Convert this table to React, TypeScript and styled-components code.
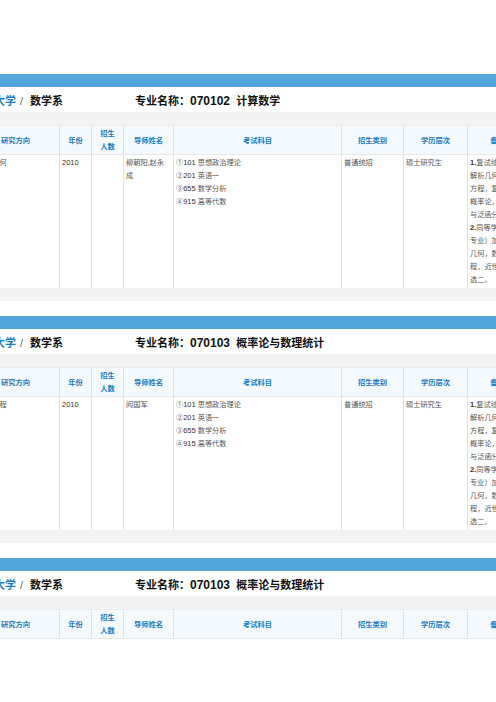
import React, { FC } from "react"
import styled, { createGlobalStyle } from "styled-components"

type Entry = {
  major: string
  code: string
  direction?: string
  year?: string
  tutors?: string
  exams?: string[]
  kind?: string
  level?: string
  notes?: string[]
}

const columns = [
  { title: "研究方向", width: 88 },
  { title: "年份", width: 32 },
  { title: "招生人数", width: 32, split: true },
  { title: "导师姓名", width: 50 },
  { title: "考试科目", width: 168, heavy: true },
  { title: "招生类别", width: 62, heavy: true },
  { title: "学历层次", width: 64 },
  { title: "备注", width: 60 },
  { title: "", width: 60 },
]

const exams = ["①101 思想政治理论", "②201 英语一", "③655 数学分析", "④915 高等代数"]

const notes = [
  "1.复试综合考试",
  "解析几何，常微分",
  "方程，复变函数，",
  "概率论，实变函数",
  "与泛函分析。",
  "2.同等学力（跨",
  "专业）加试：解析",
  "几何，数学分析，",
  "程，近世代数中任",
  "选二。",
]

const entries: Entry[] = [
  {
    major: "计算数学",
    code: "070102",
    direction: "计算几何",
    year: "2010",
    tutors: "柳朝阳,赵永成",
    exams,
    kind: "普通统招",
    level: "硕士研究生",
    notes,
  },
  {
    major: "概率论与数理统计",
    code: "070103",
    direction: "随机过程",
    year: "2010",
    tutors: "阎国军",
    exams,
    kind: "普通统招",
    level: "硕士研究生",
    notes,
  },
  { major: "概率论与数理统计", code: "070103" },
]

const template = columns.map((c) => `${c.width}px`).join(" ")

const Block: FC<{ entry: Entry }> = ({ entry }) => (
  <Section>
    <Bar />
    <TitleRow>
      <Department>
        <School>郑州大学</School>
        <Slash>/</Slash>
        数学系
      </Department>
      <Major>
        专业名称：<Code>{entry.code}</Code>
        {"  "}
        {entry.major}
      </Major>
    </TitleRow>
    <Strip />
    <Row>
      {columns.map((c, i) => (
        <HeadCell key={i} $heavy={c.heavy}>
          {c.split ? (
            <>
              {c.title.slice(0, 2)}
              <br />
              {c.title.slice(2)}
            </>
          ) : (
            c.title
          )}
        </HeadCell>
      ))}
    </Row>
    {entry.notes && (
      <>
        <Row>
          <Cell $indent>{entry.direction}</Cell>
          <Cell>
            <Num>{entry.year}</Num>
          </Cell>
          <Cell />
          <Cell>{entry.tutors}</Cell>
          <Cell $heavy>
            {entry.exams?.map((e) => (
              <Line key={e}>
                {e.slice(0, 1)}
                <Num>{e.slice(1, 4)}</Num>
                {e.slice(4)}
              </Line>
            ))}
          </Cell>
          <Cell $heavy>{entry.kind}</Cell>
          <Cell>{entry.level}</Cell>
          <Cell>
            {entry.notes.map((n, i) => (
              <Line key={i}>
                {/^\d\./.test(n) ? (
                  <>
                    <Num $bold>{n.slice(0, 2)}</Num>
                    {n.slice(2)}
                  </>
                ) : (
                  n
                )}
              </Line>
            ))}
          </Cell>
          <Cell />
        </Row>
        <Strip />
      </>
    )}
  </Section>
)

export default function App() {
  return (
    <>
      <GlobalStyle />
      <Page>
        <Inner>
          {entries.map((e, i) => (
            <Block key={i} entry={e} />
          ))}
        </Inner>
      </Page>
    </>
  )
}

const GlobalStyle = createGlobalStyle`
  html, body {
    margin: 0;
    padding: 0;
    background: #ffffff;
  }
  body {
    font-family: "Liberation Sans", "Noto Sans CJK SC", sans-serif;
  }
`

const Page = styled.div`
  width: 496px;
  height: 702px;
  overflow: hidden;
  padding-top: 74px;
  box-sizing: border-box;
`

const Inner = styled.div`
  margin-left: -28px;
  width: 620px;
  display: flex;
  flex-direction: column;
  gap: 15px;
`

const Section = styled.div`
  display: flex;
  flex-direction: column;
`

const Bar = styled.div`
  height: 13px;
  background: #55a5dd;
`

const TitleRow = styled.div`
  height: 25px;
  display: flex;
  align-items: center;
  font-size: 11px;
  font-weight: bold;
  color: #111;
`

const Department = styled.div`
  width: 163px;
  white-space: nowrap;
`

const School = styled.span`
  color: #1b7cc1;
`

const Slash = styled.span`
  color: #666;
  font-weight: normal;
  margin: 0 7px 0 4px;
`

const Major = styled.div`
  white-space: pre;
`

const Code = styled.span`
  font-size: 12px;
`

const Strip = styled.div`
  height: 13px;
  background: #f3f3f3;
`

const Row = styled.div`
  display: grid;
  grid-template-columns: ${template};
`

const HeadCell = styled.div<{ $heavy?: boolean }>`
  box-sizing: border-box;
  height: 30px;
  display: flex;
  align-items: center;
  justify-content: center;
  text-align: center;
  background: #f3f9fd;
  border-right: 1px solid #e2e2e2;
  border-left: ${({ $heavy }) => ($heavy ? "1px solid #e2e2e2" : "0")};
  margin-left: ${({ $heavy }) => ($heavy ? "-1px" : "0")};
  border-bottom: 1px solid #e8e8e8;
  border-top: 1px solid #ececec;
  color: #1b7cc1;
  font-weight: bold;
  font-size: 7.3px;
  line-height: 13px;
`

const Cell = styled.div<{ $heavy?: boolean; $indent?: boolean }>`
  box-sizing: border-box;
  height: 133px;
  padding: 1px 5px 0 ${({ $indent }) => ($indent ? "6px" : "2px")};
  border-right: 1px solid #e2e2e2;
  border-left: ${({ $heavy }) => ($heavy ? "1px solid #e2e2e2" : "0")};
  margin-left: ${({ $heavy }) => ($heavy ? "-1px" : "0")};
  color: #555;
  font-size: 7.2px;
  line-height: 13px;
  overflow: hidden;
`

const Line = styled.div`
  white-space: nowrap;
`

const Num = styled.span<{ $bold?: boolean }>`
  color: #333;
  font-size: 7.5px;
  font-weight: ${({ $bold }) => ($bold ? "bold" : "normal")};
`
